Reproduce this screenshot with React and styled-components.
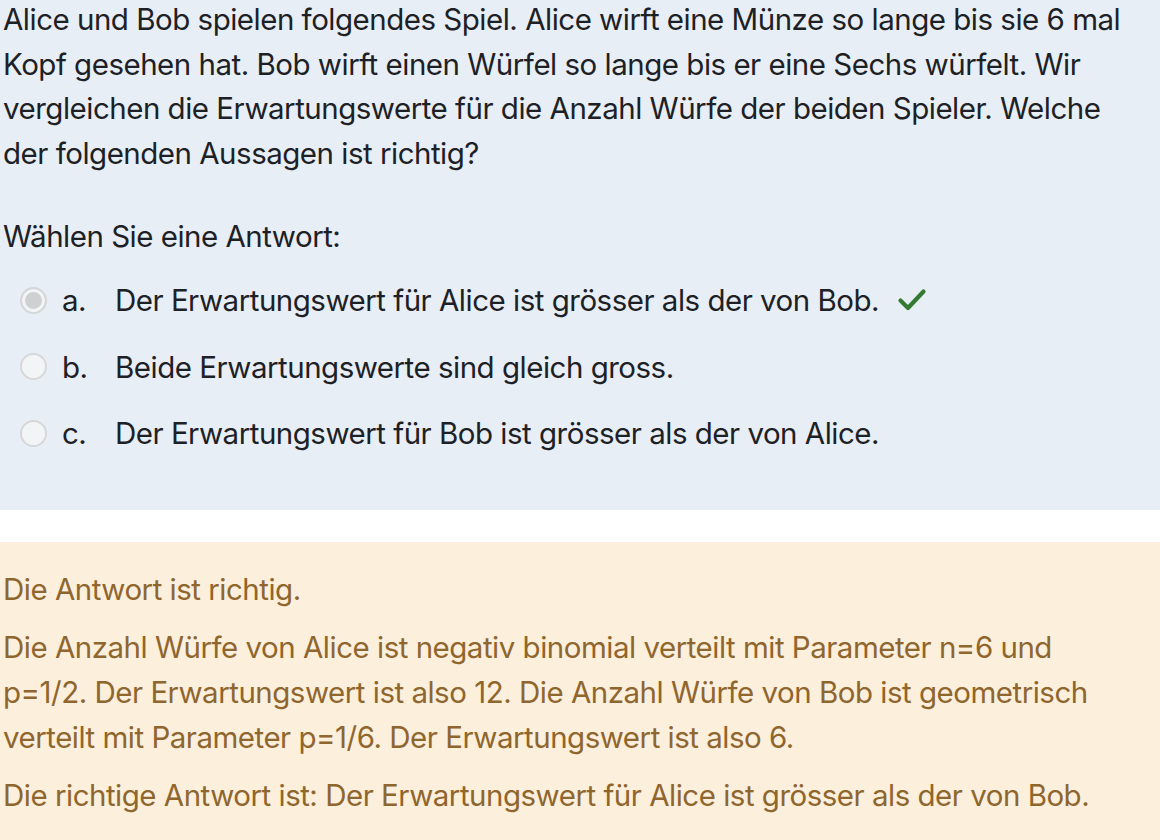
import React from 'react';
import styled, { createGlobalStyle } from 'styled-components';

const GlobalStyle = createGlobalStyle`
  body {
    margin: 0;
    background: #ffffff;
    font-family: Inter, "Noto Sans", sans-serif;
    color: #1d2125;
  }
`;

const Page = styled.div`
  width: 1160px;
  height: 840px;
  overflow: hidden;
`;

const Formulation = styled.div`
  background: #e7eef6;
  padding: 0 28px 54px 3px;
`;

const Text = styled.p`
  margin: ${props => props.first ? '-3px' : '0'} 0 0 0;
  font-size: 29.5px;
  line-height: 44.6px;
  letter-spacing: -0.5px;
`;

const Prompt = styled(Text)`
  margin-top: 39px;
`;

const Answers = styled.div`
  display: flex;
  flex-direction: column;
  gap: 22px;
  margin-top: 19px;
`;

const Row = styled.div`
  display: flex;
  align-items: center;
  font-size: 29.5px;
  line-height: 44.6px;
  letter-spacing: -0.5px;
`;

const Radio = styled.span`
  box-sizing: border-box;
  width: 27px;
  height: 27px;
  margin: 0 15px 0 17px;
  border-radius: 50%;
  border: 2px solid #d6d7d8;
  background: ${props => props.checked ? '#cfd0d2' : '#f3f4f5'};
  box-shadow: ${props => props.checked ? 'inset 0 0 0 3px #f3f4f5' : 'none'};
  flex: none;
`;

const Letter = styled.span`
  width: 53px;
  flex: none;
`;

const Check = styled.svg`
  margin-left: 18px;
  width: 30px;
  height: 26px;
`;

const Gap = styled.div`
  height: 32px;
`;

const Outcome = styled.div`
  background: #fcefdc;
  color: #8e662e;
  padding: 25px 40px 40px 3px;
  display: flex;
  flex-direction: column;
  gap: 14px;
`;

const FeedbackText = styled.p`
  margin: 0;
  font-size: 29.5px;
  line-height: 44.6px;
  letter-spacing: -0.5px;
`;

const answers = [
  { letter: 'a.', text: 'Der Erwartungswert für Alice ist grösser als der von Bob.', checked: true },
  { letter: 'b.', text: 'Beide Erwartungswerte sind gleich gross.' },
  { letter: 'c.', text: 'Der Erwartungswert für Bob ist grösser als der von Alice.' }
];

export default function App() {
  return (
    <Page>
      <GlobalStyle />
      <Formulation>
        <Text first>
          Alice und Bob spielen folgendes Spiel. Alice wirft eine Münze so lange bis sie 6 mal
          Kopf gesehen hat. Bob wirft einen Würfel so lange bis er eine Sechs würfelt. Wir
          vergleichen die Erwartungswerte für die Anzahl Würfe der beiden Spieler. Welche
          der folgenden Aussagen ist richtig?
        </Text>
        <Prompt>Wählen Sie eine Antwort:</Prompt>
        <Answers>
          {answers.map(a => (
            <Row key={a.letter}>
              <Radio checked={a.checked} />
              <Letter>{a.letter}</Letter>
              <span>{a.text}</span>
              {a.checked && (
                <Check viewBox="0 0 30 26">
                  <path
                    d="M3.5 13.5 L11 21 L26.5 4.5"
                    fill="none"
                    stroke="#357a32"
                    strokeWidth="4.2"
                    strokeLinecap="round"
                    strokeLinejoin="round"
                  />
                </Check>
              )}
            </Row>
          ))}
        </Answers>
      </Formulation>
      <Gap />
      <Outcome>
        <FeedbackText>Die Antwort ist richtig.</FeedbackText>
        <FeedbackText>
          Die Anzahl Würfe von Alice ist negativ binomial verteilt mit Parameter n=6 und
          p=1/2. Der Erwartungswert ist also 12. Die Anzahl Würfe von Bob ist geometrisch
          verteilt mit Parameter p=1/6. Der Erwartungswert ist also 6.
        </FeedbackText>
        <FeedbackText>
          Die richtige Antwort ist: Der Erwartungswert für Alice ist grösser als der von Bob.
        </FeedbackText>
      </Outcome>
    </Page>
  );
}
